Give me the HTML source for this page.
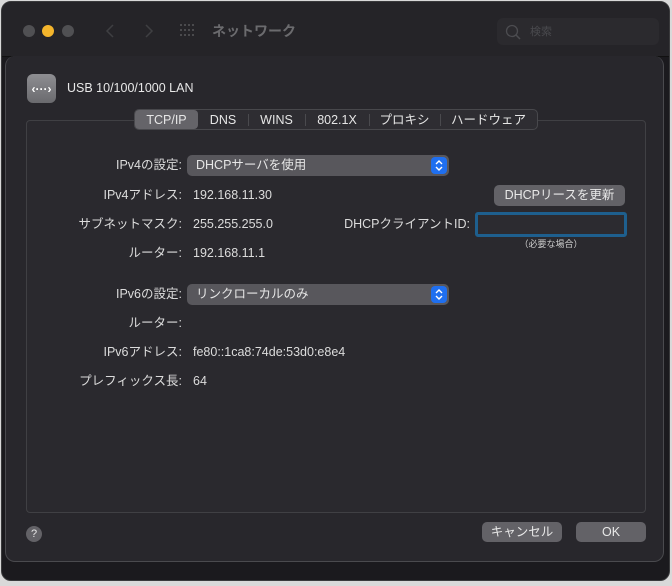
<!DOCTYPE html>
<html><head><meta charset="utf-8">
<style>
*{margin:0;padding:0;box-sizing:border-box}
body{width:672px;height:586px;background:#d9d9d9;position:relative;overflow:hidden;font-family:"Liberation Sans","Noto Sans CJK JP",sans-serif;color:#dcdcdc;font-size:12px;line-height:16px}
.abs{position:absolute}
.win{left:1px;top:1px;width:669px;height:580px;background:#1b1a1e;border-radius:10px;border:1px solid #3a3a3c;overflow:hidden}
.title{left:0;top:0;width:667px;height:55px;background:#252428;border-bottom:1px solid #111}
.dot{width:12px;height:12px;border-radius:50%;background:#505053;top:23px}
.sheet{left:5px;top:56px;width:659px;height:506px;background:#28272c;border:1px solid #4a4a4e;border-top:none;border-radius:10px}
.box{left:26px;top:120px;width:620px;height:393px;background:#2a292e;border:1px solid #404044;border-radius:4px}
.lab{text-align:right;width:170px;left:12px;font-size:12.5px;color:#dcdcdc;height:16px;line-height:16px}
.val{left:193px;font-size:12.5px;color:#dcdcdc;height:16px;line-height:16px}
.pop{left:187px;width:262px;height:21px;background:#58575c;border-radius:5px;padding-left:9px;line-height:21px;color:#e6e6e6;font-size:12.5px}
.pop .ar{position:absolute;right:2px;top:2px;width:16px;height:17px;background:#1f6ff0;border-radius:4px;line-height:0}
.btn{background:#636267;border-radius:5px;text-align:center;color:#e8e8e8;font-size:12.5px}
.tab{top:110px;height:20px;line-height:20px;text-align:center;color:#e6e6e6;font-size:12.5px}
.sep{top:114px;width:1px;height:12px;background:#4a4a4e}
</style></head><body>
<div class="abs win">
 <div class="abs title">
  <div class="abs dot" style="left:21px"></div>
  <div class="abs dot" style="left:40px;background:#f4b52c"></div>
  <div class="abs dot" style="left:60px"></div>
  <svg class="abs" style="left:102px;top:20px" width="60" height="18"><path d="M9 3 L3 9 L9 15" stroke="#3f3f42" stroke-width="1.5" fill="none"/><path d="M42 3 L48 9 L42 15" stroke="#3f3f42" stroke-width="1.5" fill="none"/></svg>
  <svg class="abs" style="left:178px;top:22px" width="18" height="14"><g fill="#4a4a4d"><rect x="0" y="0" width="2" height="2"/><rect x="4" y="0" width="2" height="2"/><rect x="8" y="0" width="2" height="2"/><rect x="12" y="0" width="2" height="2"/><rect x="0" y="5" width="2" height="2"/><rect x="4" y="5" width="2" height="2"/><rect x="8" y="5" width="2" height="2"/><rect x="12" y="5" width="2" height="2"/><rect x="0" y="10" width="2" height="2"/><rect x="4" y="10" width="2" height="2"/><rect x="8" y="10" width="2" height="2"/><rect x="12" y="10" width="2" height="2"/></g></svg>
  <div class="abs" style="left:210px;top:19px;font-size:14px;font-weight:bold;color:#6b6b6e;line-height:20px">ネットワーク</div>
  <div class="abs" style="left:495px;top:16px;width:162px;height:27px;background:#2b2a2e;border-radius:6px"></div>
  <svg class="abs" style="left:503px;top:22px" width="16" height="16"><circle cx="7" cy="7" r="5.5" stroke="#4c4c50" stroke-width="1.3" fill="none"/><path d="M11 11 L15 15" stroke="#4c4c50" stroke-width="1.5"/></svg>
  <div class="abs" style="left:528px;top:22px;font-size:11px;color:#4a4a4e">検索</div>
 </div>
</div>
<div class="abs sheet"></div>
<div class="abs" style="left:27px;top:74px;width:29px;height:29px;border-radius:6px;background:linear-gradient(#8e8e92,#6a6a6e)"></div>
<div class="abs" style="left:27px;top:81px;width:29px;text-align:center;color:#fff;font-size:12px;font-weight:bold">‹···›</div>
<div class="abs" style="left:67px;top:80px;font-size:12.5px;color:#e8e8e8">USB 10/100/1000 LAN</div>
<div class="abs box"></div>
<div class="abs" style="left:134px;top:109px;width:404px;height:21px;background:#2e2d32;border:1px solid #48484c;border-radius:5px"></div>
<div class="abs" style="left:135px;top:110px;width:63px;height:19px;background:#656469;border-radius:4px"></div>
<div class="abs tab" style="left:135px;width:63px">TCP/IP</div>
<div class="abs tab" style="left:198px;width:50px">DNS</div>
<div class="abs sep" style="left:248px"></div>
<div class="abs tab" style="left:248px;width:57px">WINS</div>
<div class="abs sep" style="left:305px"></div>
<div class="abs tab" style="left:305px;width:64px">802.1X</div>
<div class="abs sep" style="left:369px"></div>
<div class="abs tab" style="left:369px;width:71px">プロキシ</div>
<div class="abs sep" style="left:440px"></div>
<div class="abs tab" style="left:440px;width:97px">ハードウェア</div>

<div class="abs lab" style="top:157px">IPv4の設定:</div>
<div class="abs pop" style="top:155px">DHCPサーバを使用<div class="ar"><svg width="16" height="17"><path d="M5 7 L8 4 L11 7 M5 10 L8 13 L11 10" stroke="#fff" stroke-width="1.4" fill="none"/></svg></div></div>
<div class="abs lab" style="top:187px">IPv4アドレス:</div><div class="abs val" style="top:187px">192.168.11.30</div>
<div class="abs btn" style="left:494px;top:185px;width:131px;height:21px;line-height:21px">DHCPリースを更新</div>
<div class="abs lab" style="top:216px">サブネットマスク:</div><div class="abs val" style="top:216px">255.255.255.0</div>
<div class="abs" style="left:320px;top:216px;width:150px;text-align:right;font-size:12.5px">DHCPクライアントID:</div>
<div class="abs" style="left:475px;top:212px;width:152px;height:25px;border:3px solid #1e5f8e;border-radius:3px;background:#2c2b30"></div>
<div class="abs" style="left:476px;top:236px;width:150px;text-align:center;font-size:9px;color:#cfcfcf">（必要な場合）</div>
<div class="abs lab" style="top:245px">ルーター:</div><div class="abs val" style="top:245px">192.168.11.1</div>

<div class="abs lab" style="top:286px">IPv6の設定:</div>
<div class="abs pop" style="top:284px">リンクローカルのみ<div class="ar"><svg width="16" height="17"><path d="M5 7 L8 4 L11 7 M5 10 L8 13 L11 10" stroke="#fff" stroke-width="1.4" fill="none"/></svg></div></div>
<div class="abs lab" style="top:315px">ルーター:</div>
<div class="abs lab" style="top:344px">IPv6アドレス:</div><div class="abs val" style="top:344px">fe80::1ca8:74de:53d0:e8e4</div>
<div class="abs lab" style="top:373px">プレフィックス長:</div><div class="abs val" style="top:373px">64</div>

<div class="abs" style="left:26px;top:526px;width:16px;height:16px;border-radius:50%;background:#636267;color:#e8e8e8;font-size:11px;text-align:center;line-height:16px">?</div>
<div class="abs btn" style="left:482px;top:522px;width:80px;height:20px;line-height:20px">キャンセル</div>
<div class="abs btn" style="left:576px;top:522px;width:70px;height:20px;line-height:20px">OK</div>
</body></html>
